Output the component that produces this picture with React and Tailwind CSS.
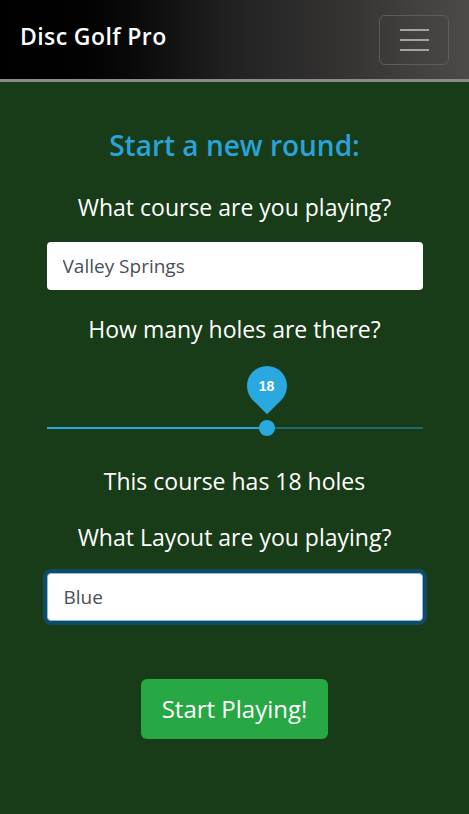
export default function App() {
  return (
    <div className="min-h-[814px] bg-[#183b18] font-['Open_Sans',sans-serif]">
      <nav className="flex h-[82px] items-center justify-between border-b-[3px] border-[#8a8a8a] bg-gradient-to-r from-black via-[#222] to-[#4d4947] pl-5 pr-5">
        <span className="pb-[6px] text-[23px] font-semibold tracking-[0.4px] text-white">Disc Golf Pro</span>
        <button className="flex h-[50px] w-[70px] flex-col items-center justify-center gap-[8px] rounded-md border border-[#5f5b59]">
          <span className="h-[2px] w-[29px] bg-[#a6a4a3]" />
          <span className="h-[2px] w-[29px] bg-[#a6a4a3]" />
          <span className="h-[2px] w-[29px] bg-[#a6a4a3]" />
        </button>
      </nav>

      <main className="mx-auto flex w-[376px] flex-col items-center pt-[46px] text-white">
        <h1 className="text-[28px] leading-[34px] font-semibold text-[#2aa3d9]">Start a new round:</h1>
        <p className="mt-[30px] text-[23px] leading-[30px]">What course are you playing?</p>
        <input
          readOnly
          value="Valley Springs"
          className="mt-[20px] h-[48px] w-full rounded-[4px] bg-white px-4 text-[19px] text-[#495057] outline-none"
        />
        <p className="mt-[24px] text-[23px] leading-[30px]">How many holes are there?</p>

        <div className="relative mt-[22px] h-[70px] w-full">
          <div className="absolute left-0 right-0 top-[61px] h-[2px] bg-[#1e6a70]" />
          <div className="absolute left-0 top-[61px] h-[2px] w-[220px] bg-[#2aa9e0]" />
          <div className="absolute left-[212px] top-[54px] h-[16px] w-[16px] rounded-full bg-[#2aa9e0]" />
          <div className="absolute left-[200px] top-0 flex h-[40px] w-[40px] rotate-45 items-center justify-center rounded-t-full rounded-bl-full bg-[#2aa9e0]">
            <span className="-rotate-45 font-['Liberation_Sans',sans-serif] text-[14px] font-bold text-white">18</span>
          </div>
        </div>

        <p className="mt-[30px] text-[23px] leading-[30px]">This course has 18 holes</p>
        <p className="mt-[26px] text-[23px] leading-[30px]">What Layout are you playing?</p>
        <input
          readOnly
          value="Blue"
          className="mt-[21px] h-[48px] w-full rounded-[4px] border border-[#80bdff] bg-white px-4 text-[19px] text-[#495057] shadow-[0_0_0_4px_#124a5f] outline-none"
        />
        <button className="mt-[58px] h-[60px] w-[187px] rounded-md bg-[#28a745] text-[24px] text-white">
          Start Playing!
        </button>
      </main>
    </div>
  );
}
